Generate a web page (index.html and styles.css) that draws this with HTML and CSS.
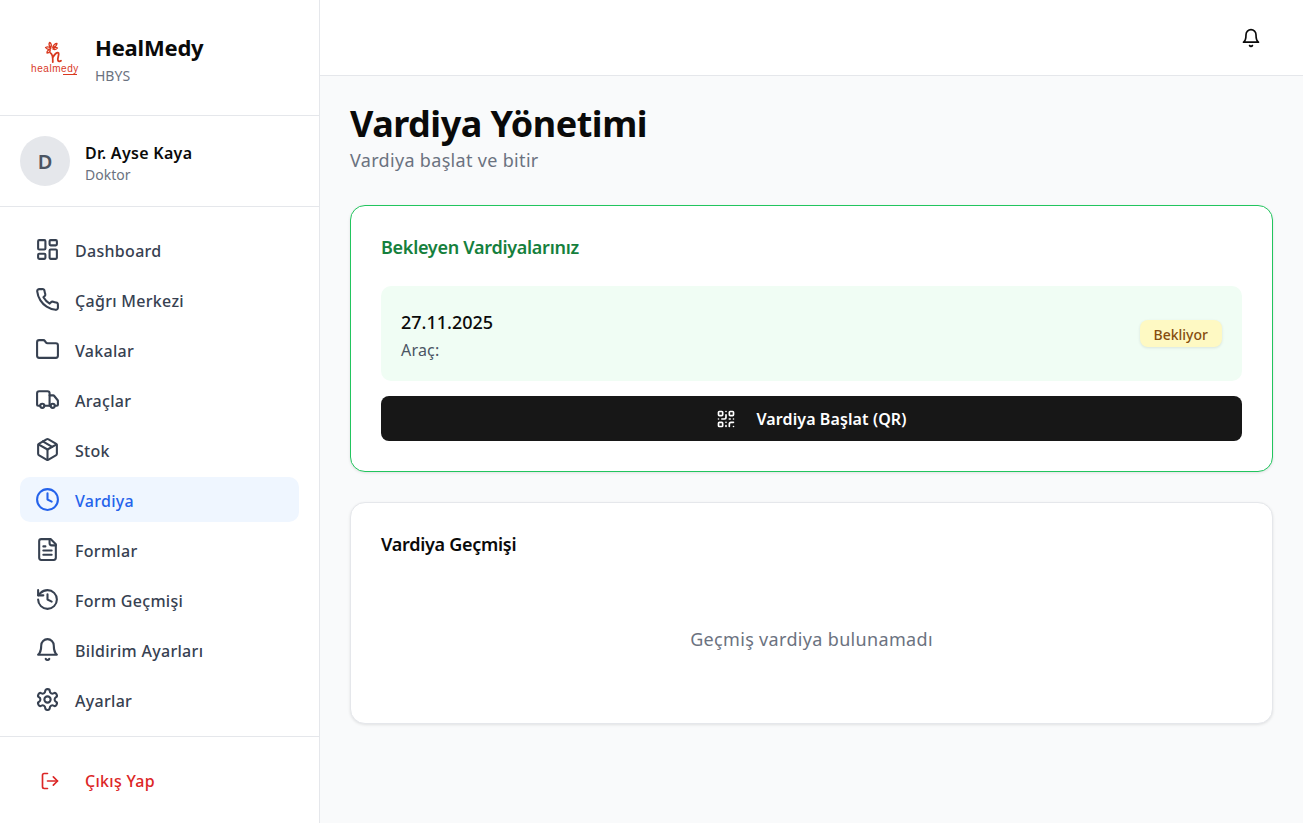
FILE: index.html
```html
<!DOCTYPE html>
<html lang="tr">
<head>
<meta charset="utf-8">
<title>Vardiya Yönetimi</title>
<link rel="stylesheet" href="styles.css">
</head>
<body>
<div class="app">
  <aside class="sidebar">
    <div class="brand">
      <div class="logo">
        <svg class="logo-mark" viewBox="0 0 24 24" width="24" height="24" fill="none" stroke="#d9391f" stroke-linecap="round" stroke-linejoin="round">
          <path d="M7.500 12c2 1 2.500 3 2.300 9" stroke-width="1.800"/>
          <path d="M10 16c2-3 4.500-5.500 5.500-4 1 2-1.500 5-.5 7.500.5 1 2 1 3 .3" stroke-width="1.800"/>
          <path d="M6.500 1.500c1.800.5 2.200 2.800 1.500 4.800-1.500-1-2.500-2.800-1.500-4.800zM14 2.500c-.3 2-2.300 3.500-4.300 3.800.3-1.800 2.300-3.800 4.300-3.800zM2.500 6.500c2-1 4-.5 5.300 1-1.500 1.300-4 1-5.300-1zM14.500 7c-1 1.500-3 1.700-4.700 1 1-1.500 3.200-2 4.700-1zM4 12c-.3-1.800 1.500-3.200 3.200-3.500.2 1.600-1 3.200-3.200 3.500z" stroke-width="1.300"/>
        </svg>
        <span class="logo-text">healmedy</span>
        <span class="logo-line"></span>
      </div>
      <div>
        <div class="brand-name">HealMedy</div>
        <div class="brand-sub">HBYS</div>
      </div>
    </div>
    <div class="user">
      <div class="avatar">D</div>
      <div class="user-info">
        <div class="user-name">Dr. Ayse Kaya</div>
        <div class="user-role">Doktor</div>
      </div>
    </div>
    <nav class="nav">
      <a class="nav-item"><svg class="icon" viewBox="0 0 24 24"><rect x="3" y="3" width="7" height="9" rx="1"/><rect x="14" y="3" width="7" height="5" rx="1"/><rect x="14" y="12" width="7" height="9" rx="1"/><rect x="3" y="16" width="7" height="5" rx="1"/></svg><span class="label">Dashboard</span></a>
      <a class="nav-item"><svg class="icon" viewBox="0 0 24 24"><path d="M22 16.920v3a2 2 0 0 1-2.180 2 19.790 19.790 0 0 1-8.630-3.070 19.500 19.500 0 0 1-6-6 19.790 19.790 0 0 1-3.070-8.670A2 2 0 0 1 4.110 2h3a2 2 0 0 1 2 1.720 12.840 12.840 0 0 0 .7 2.810 2 2 0 0 1-.45 2.110L8.090 9.910a16 16 0 0 0 6 6l1.270-1.270a2 2 0 0 1 2.110-.45 12.840 12.840 0 0 0 2.810.7A2 2 0 0 1 22 16.920z"/></svg><span class="label">Çağrı Merkezi</span></a>
      <a class="nav-item"><svg class="icon" viewBox="0 0 24 24"><path d="M20 20a2 2 0 0 0 2-2V8a2 2 0 0 0-2-2h-7.900a2 2 0 0 1-1.690-.9L9.600 3.900A2 2 0 0 0 7.930 3H4a2 2 0 0 0-2 2v13a2 2 0 0 0 2 2Z"/></svg><span class="label">Vakalar</span></a>
      <a class="nav-item"><svg class="icon" viewBox="0 0 24 24"><path d="M14 18V6a2 2 0 0 0-2-2H4a2 2 0 0 0-2 2v11a1 1 0 0 0 1 1h2"/><path d="M15 18H9"/><path d="M19 18h2a1 1 0 0 0 1-1v-3.650a1 1 0 0 0-.22-.624l-3.480-4.350A1 1 0 0 0 17.520 8H14"/><circle cx="17" cy="18" r="2"/><circle cx="7" cy="18" r="2"/></svg><span class="label">Araçlar</span></a>
      <a class="nav-item"><svg class="icon" viewBox="0 0 24 24"><path d="M21 8a2 2 0 0 0-1-1.730l-7-4a2 2 0 0 0-2 0l-7 4A2 2 0 0 0 3 8v8a2 2 0 0 0 1 1.730l7 4a2 2 0 0 0 2 0l7-4A2 2 0 0 0 21 16Z"/><path d="m3.300 7 8.700 5 8.700-5"/><path d="M12 22V12"/><path d="m7.500 4.270 9 5.150"/></svg><span class="label">Stok</span></a>
      <a class="nav-item active"><svg class="icon" viewBox="0 0 24 24"><circle cx="12" cy="12" r="10"/><path d="M12 6v6l4 2"/></svg><span class="label">Vardiya</span></a>
      <a class="nav-item"><svg class="icon" viewBox="0 0 24 24"><path d="M15 2H6a2 2 0 0 0-2 2v16a2 2 0 0 0 2 2h12a2 2 0 0 0 2-2V7Z"/><path d="M14 2v4a2 2 0 0 0 2 2h4"/><path d="M10 9H8"/><path d="M16 13H8"/><path d="M16 17H8"/></svg><span class="label">Formlar</span></a>
      <a class="nav-item"><svg class="icon" viewBox="0 0 24 24"><path d="M3 12a9 9 0 1 0 9-9 9.750 9.750 0 0 0-6.740 2.740L3 8"/><path d="M3 3v5h5"/><path d="M12 7v5l4 2"/></svg><span class="label">Form Geçmişi</span></a>
      <a class="nav-item"><svg class="icon" viewBox="0 0 24 24"><path d="M6 8a6 6 0 0 1 12 0c0 7 3 9 3 9H3s3-2 3-9"/><path d="M10.300 21a1.940 1.940 0 0 0 3.400 0"/></svg><span class="label">Bildirim Ayarları</span></a>
      <a class="nav-item"><svg class="icon" viewBox="0 0 24 24"><path d="M12.220 2h-.44a2 2 0 0 0-2 2v.18a2 2 0 0 1-1 1.730l-.43.25a2 2 0 0 1-2 0l-.15-.08a2 2 0 0 0-2.730.73l-.22.38a2 2 0 0 0 .73 2.730l.15.1a2 2 0 0 1 1 1.720v.51a2 2 0 0 1-1 1.740l-.15.09a2 2 0 0 0-.73 2.730l.22.38a2 2 0 0 0 2.730.73l.15-.08a2 2 0 0 1 2 0l.43.25a2 2 0 0 1 1 1.730V20a2 2 0 0 0 2 2h.44a2 2 0 0 0 2-2v-.18a2 2 0 0 1 1-1.730l.43-.25a2 2 0 0 1 2 0l.15.08a2 2 0 0 0 2.730-.73l.22-.39a2 2 0 0 0-.73-2.730l-.15-.08a2 2 0 0 1-1-1.740v-.5a2 2 0 0 1 1-1.740l.15-.09a2 2 0 0 0 .73-2.730l-.22-.38a2 2 0 0 0-2.730-.73l-.15.08a2 2 0 0 1-2 0l-.43-.25a2 2 0 0 1-1-1.730V4a2 2 0 0 0-2-2z"/><circle cx="12" cy="12" r="3"/></svg><span class="label">Ayarlar</span></a>
    </nav>
    <div class="sidebar-foot">
      <a class="logout"><svg class="icon-sm" viewBox="0 0 24 24"><path d="M9 21H5a2 2 0 0 1-2-2V5a2 2 0 0 1 2-2h4"/><path d="m16 17 5-5-5-5"/><path d="M21 12H9"/></svg><span>Çıkış Yap</span></a>
    </div>
  </aside>
  <div class="main">
    <header class="topbar">
      <svg class="icon-bell" viewBox="0 0 24 24"><path d="M6 8a6 6 0 0 1 12 0c0 7 3 9 3 9H3s3-2 3-9"/><path d="M10.300 21a1.940 1.940 0 0 0 3.400 0"/></svg>
    </header>
    <main class="content">
      <h1 class="title">Vardiya Yönetimi</h1>
      <p class="subtitle">Vardiya başlat ve bitir</p>
      <section class="card card-green">
        <h2 class="card-title green">Bekleyen Vardiyalarınız</h2>
        <div class="pending">
          <div class="pending-info">
            <div class="date">27.11.2025</div>
            <div class="vehicle">Araç:</div>
          </div>
          <span class="badge">Bekliyor</span>
        </div>
        <button class="start">
          <svg class="icon-qr" viewBox="0 0 24 24"><rect width="5" height="5" x="3" y="3" rx="1"/><rect width="5" height="5" x="16" y="3" rx="1"/><rect width="5" height="5" x="3" y="16" rx="1"/><path d="M21 16h-3a2 2 0 0 0-2 2v3"/><path d="M21 21v.01"/><path d="M12 7v3a2 2 0 0 1-2 2H7"/><path d="M3 12h.01"/><path d="M12 3h.01"/><path d="M12 16v.01"/><path d="M16 12h1"/><path d="M21 12v.01"/><path d="M12 21v-1"/></svg>
          <span>Vardiya Başlat (QR)</span>
        </button>
      </section>
      <section class="card">
        <h2 class="card-title">Vardiya Geçmişi</h2>
        <div class="empty">Geçmiş vardiya bulunamadı</div>
      </section>
    </main>
  </div>
</div>
</body>
</html>
```
FILE: styles.css
```css
* { box-sizing: border-box; }
html, body { margin: 0; height: 100%; }
body { font-family: "Noto Sans", "Open Sans", sans-serif; background: #f9fafb; color: #0a0a0a; overflow: hidden; }
.app { display: flex; height: 823px; }

.sidebar { width: 320px; flex: none; background: #fff; border-right: 1px solid #e5e7eb; display: flex; flex-direction: column; }
.brand { height: 116px; border-bottom: 1px solid #e5e7eb; padding: 0 20px 0 30px; display: flex; align-items: center; gap: 15px; }
.logo { width: 50px; display: flex; flex-direction: column; align-items: center; }
.logo-mark { display: block; margin-bottom: -1px; }
.logo-text { color: #d9391f; font-family: "Liberation Sans", sans-serif; font-size: 10px; line-height: 10px; letter-spacing: 0.55px; }
.logo-line { align-self: flex-end; width: 14px; height: 1px; margin: 0 3px 0 0; background: #d9391f; }
.brand-name { font-size: 22px; font-weight: 700; line-height: 30px; margin-top: 2px; letter-spacing: -0.2px; }
.brand-sub { font-size: 14px; line-height: 20px; color: #6b7280; margin-top: 4px; }

.user { height: 91px; border-bottom: 1px solid #e5e7eb; padding: 0 20px; display: flex; align-items: center; gap: 15px; }
.avatar { width: 50px; height: 50px; border-radius: 50%; background: #e5e7eb; color: #4b5563; font-size: 20px; font-weight: 600; display: flex; align-items: center; justify-content: center; }
.user-info { padding-top: 5px; }
.user-name { font-size: 16px; font-weight: 600; line-height: 22px; letter-spacing: 0.3px; }
.user-role { font-size: 14px; line-height: 20px; color: #6b7280; margin-top: 1px; }

.nav { flex: 1; padding: 20px 20px 0; display: flex; flex-direction: column; gap: 5px; }
.nav-item { height: 45px; padding: 0 15px; border-radius: 10px; display: flex; align-items: center; gap: 15px; font-size: 16px; font-weight: 500; color: #374151; }
.nav-item.active { background: #eff6ff; color: #2563eb; }
.label { padding-top: 2px; letter-spacing: 0.3px; }
.icon { width: 25px; height: 25px; flex: none; fill: none; stroke: currentColor; stroke-width: 2; stroke-linecap: round; stroke-linejoin: round; }

.sidebar-foot { height: 87px; border-top: 1px solid #e5e7eb; padding: 21px 20px 0; }
.logout { height: 45px; padding: 0 20px; display: flex; align-items: center; gap: 25px; font-size: 16px; font-weight: 500; color: #dc2626; letter-spacing: 0.3px; }
.icon-sm { width: 20px; height: 20px; flex: none; fill: none; stroke: currentColor; stroke-width: 2; stroke-linecap: round; stroke-linejoin: round; }

.main { flex: 1; min-width: 0; display: flex; flex-direction: column; }
.topbar { height: 76px; flex: none; background: #fff; border-bottom: 1px solid #e5e7eb; padding: 0 42px 0 0; display: flex; align-items: center; justify-content: flex-end; }
.icon-bell { width: 20px; height: 20px; fill: none; stroke: #0a0a0a; stroke-width: 2; stroke-linecap: round; stroke-linejoin: round; }

.content { padding: 28px 30px 30px; }
.title { margin: 0; font-size: 36px; line-height: 40px; font-weight: 700; letter-spacing: -0.5px; }
.subtitle { margin: 1px 0 0; font-size: 18px; line-height: 30px; color: #6b7280; letter-spacing: 0.32px; }

.card { margin-top: 30px; background: #fff; border: 1px solid #e5e7eb; border-radius: 15px; padding: 30px; box-shadow: 0 1px 3px rgba(0,0,0,.1); }
.card-green { border-color: #22c55e; }
.card-title { margin: 0; font-size: 18px; line-height: 23px; font-weight: 600; letter-spacing: -0.28px; }
.green { color: #15803d; }

.pending { margin-top: 27px; height: 95px; background: #f0fdf4; border-radius: 10px; padding: 0 20px; display: flex; align-items: center; justify-content: space-between; }
.pending-info { padding-top: 2px; }
.date { font-size: 18px; line-height: 28px; font-weight: 500; }
.vehicle { font-size: 16px; line-height: 24px; margin-top: 2px; color: #4b5563; letter-spacing: 0.2px; }
.badge { background: #fef9c3; color: #854d0e; font-size: 14px; font-weight: 500; line-height: 20px; padding: 5px 14px 2px; border-radius: 8px; box-shadow: 0 1px 3px rgba(0,0,0,.1); }

.start { margin-top: 15px; width: 100%; height: 45px; background: #171717; color: #fff; border: 0; border-radius: 8px; font: 600 16px "Noto Sans", "Open Sans", sans-serif; letter-spacing: 0.1px; display: flex; align-items: center; justify-content: center; gap: 20px; }
.icon-qr { width: 20px; height: 20px; fill: none; stroke: #fff; stroke-width: 2; stroke-linecap: round; stroke-linejoin: round; }

.empty { margin-top: 28px; padding: 40px 0 39px; text-align: center; font-size: 18px; line-height: 30px; color: #6b7280; letter-spacing: 0.33px; }
```
